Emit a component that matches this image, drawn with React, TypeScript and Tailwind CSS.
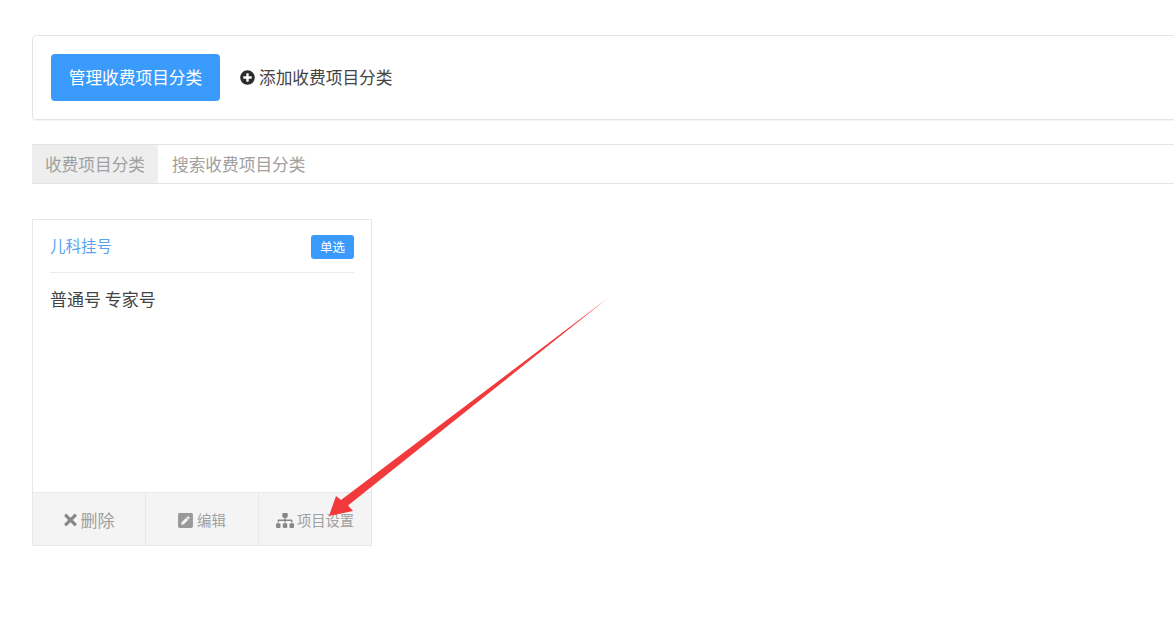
import { FaPlusCircle, FaTimes, FaPenSquare, FaSitemap } from "react-icons/fa";

const font = { fontFamily: '"Noto Sans CJK SC", "Noto Sans", sans-serif' };

function Card() {
  return (
    <div className="flex h-[327px] w-[340px] flex-col border border-[#e8e8e8] bg-white">
      <div className="mx-[17px] flex h-[53px] shrink-0 items-center justify-between border-b border-[#ececec]">
        <span className="text-[15.5px] leading-none text-[#5aa2ee]">儿科挂号</span>
        <span className="mt-[2px] flex h-[24px] w-[43px] items-center justify-center rounded-[3px] bg-[#3a9bfc] text-[12.5px] text-white">单选</span>
      </div>
      <div className="mx-[17px] flex-1 pt-[16px] text-[17px] leading-[20px] text-[#444]">普通号 专家号</div>
      <div className="flex h-[53px] shrink-0 border-t border-[#e8e8e8] bg-[#f4f4f4] text-[#a0a0a0]">
        <div className="flex flex-1 items-center justify-center gap-[4px] border-r border-[#e8e8e8] pt-[2px] text-[17px]">
          <FaTimes className="h-[18px] w-[13px] text-[#888]" />
          <span>删除</span>
        </div>
        <div className="flex flex-1 items-center justify-center gap-[4px] border-r border-[#e8e8e8] pt-[2px] text-[14.4px]">
          <FaPenSquare className="h-[17px] w-[15px] text-[#999]" />
          <span>编辑</span>
        </div>
        <div className="flex flex-1 items-center justify-center gap-[3px] pt-[2px] text-[14.3px]">
          <FaSitemap className="h-[15px] w-[18px] text-[#888]" preserveAspectRatio="none" />
          <span>项目设置</span>
        </div>
      </div>
    </div>
  );
}

export default function App() {
  return (
    <div className="relative h-[642px] w-[1174px] overflow-hidden bg-white pl-[32px] pt-[35px]" style={font}>
      <div className="flex h-[85px] w-[1200px] items-center gap-[20px] rounded-[4px] border border-[#e4e4e4] pl-[18px] shadow-[0_1px_1px_rgba(0,0,0,0.05)]">
        <button className="h-[47px] w-[169px] rounded-[4px] bg-[#3a9bfc] text-[16.7px] text-white">管理收费项目分类</button>
        <div className="flex items-center gap-[4px] text-[16.7px] text-[#444]">
          <FaPlusCircle className="h-[15px] w-[15px] text-[#2b2b2b]" />
          <span>添加收费项目分类</span>
        </div>
      </div>
      <div className="mt-[24px] flex h-[40px] w-[1200px] border-y border-[#e4e4e4] text-[16.7px] text-[#a0a0a0]">
        <div className="flex w-[126px] items-center justify-center bg-[#eeeeee] pt-[2px]">收费项目分类</div>
        <div className="flex flex-1 items-center pl-[14px] pt-[2px]">搜索收费项目分类</div>
      </div>
      <div className="mt-[35px]">
        <Card />
      </div>
      <svg className="pointer-events-none absolute left-0 top-0" width="1174" height="642" viewBox="0 0 1174 642">
        <path d="M608 298 L348 505.5 L353 511 L329 516 L336 496 L341 500 Z" fill="#f23a3c" />
      </svg>
    </div>
  );
}
